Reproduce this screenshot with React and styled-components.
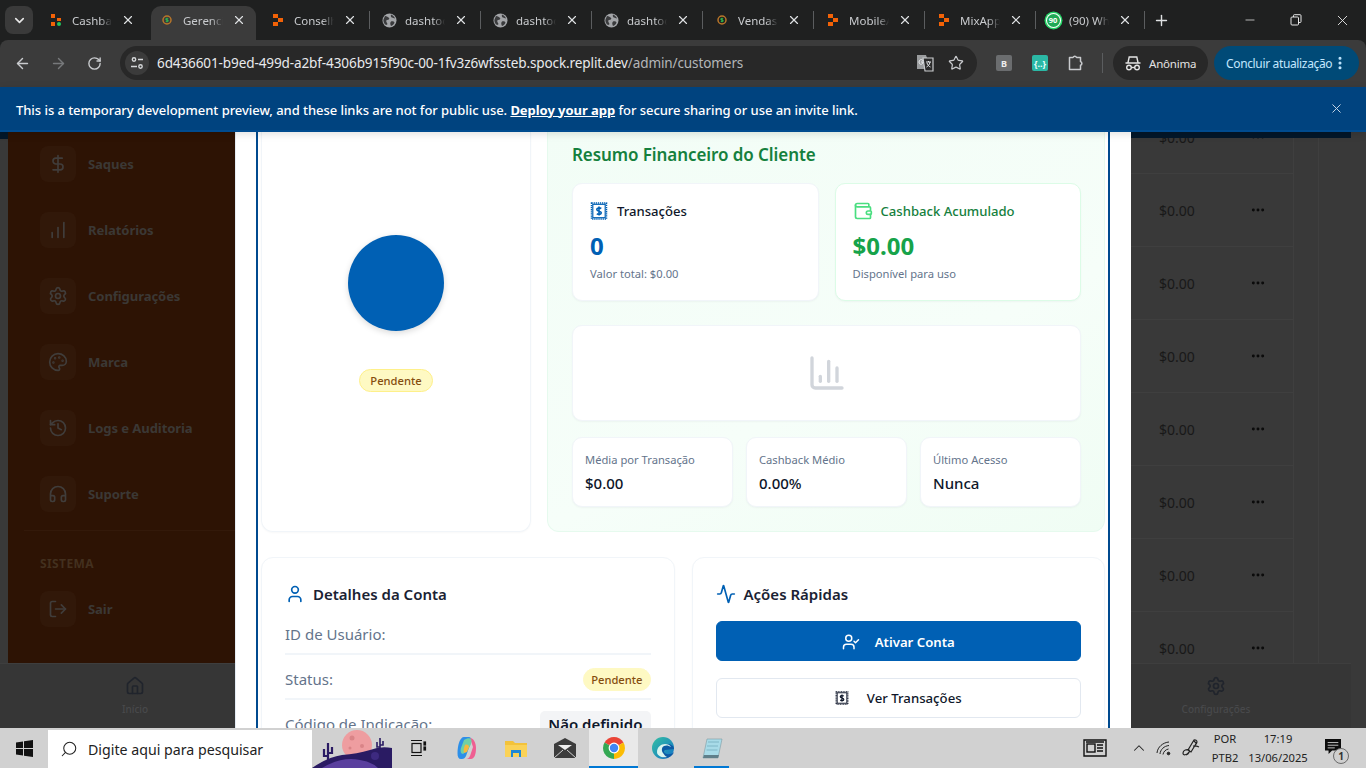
import React from "react";
import styled, { createGlobalStyle } from "styled-components";
import {
  ArrowLeft, ArrowRight, RotateCw, Star, X, Plus, Minus, ChevronDown, ChevronUp,
  DollarSign, ChartNoAxesColumnIncreasing, Settings, Palette, History, Headphones, LogOut,
  House, Wallet, ChartColumn, User, Activity, UserCheck, MoreHorizontal, Search, EllipsisVertical,
} from "lucide-react";

const Global = createGlobalStyle`
  html, body { margin: 0; padding: 0; width: 100%; height: 100%; overflow: hidden; }
  body { font-family: "Noto Sans", "Open Sans", sans-serif; }
  * { box-sizing: border-box; }
`;

const Screen = styled.div`
  width: 1366px; height: 768px; display: flex; flex-direction: column; overflow: hidden; background: #1f2020;
`;

/* ---------- browser chrome ---------- */
const TabStrip = styled.div`
  height: 40px; flex: none; display: flex; align-items: flex-end; padding-left: 5px; color: #d5d7d9;
`;
const TabMenu = styled.div`
  width: 28px; height: 28px; margin: 0 7px 6px 0; border-radius: 8px; background: #3a3a3a;
  display: flex; align-items: center; justify-content: center; color: #e6e6e6;
`;
const Tab = styled.div`
  position: relative; width: 105px; height: 34px; margin-right: ${p => p.$mr ?? 6}px; padding: 0 8px 6px;
  display: flex; align-items: center; gap: 8px; flex: none;
  border-radius: 10px 10px 0 0; background: ${p => (p.$active ? "#3b3b3b" : "transparent")};
  &::after {
    content: ""; display: ${p => (p.$sep ? "block" : "none")}; position: absolute;
    right: -3px; top: 5px; width: 1px; height: 18px; background: #5b5d5f;
  }
`;
const TabIcon = styled.span`
  width: 16px; height: 16px; flex: none; display: flex; align-items: center; justify-content: center;
`;
const TabLabel = styled.span`
  width: 40px; flex: none; overflow: hidden; white-space: nowrap; font-size: 11.5px; color: #c9cbce;
  -webkit-mask-image: linear-gradient(to right, #000 70%, transparent 100%);
  mask-image: linear-gradient(to right, #000 70%, transparent 100%);
`;
const TabClose = styled.span`
  width: 16px; height: 16px; flex: none; display: flex; align-items: center; justify-content: center; color: #dfe1e3;
`;
const NewTab = styled.span`
  display: flex; margin: 0 0 11px 5px; color: #dfe1e3;
`;
const WindowControls = styled.div`
  margin-left: auto; display: flex; align-self: stretch; color: #e6e6e6;
`;
const WindowButton = styled.span`
  width: 46.5px; display: flex; align-items: center; justify-content: center;
`;

const Toolbar = styled.div`
  height: 47px; flex: none; background: #3b3b3b; border-radius: 8px 8px 0 0;
  display: flex; align-items: center; padding: 0 7px 1px 4px; color: #c9cbce;
`;
const NavButton = styled.span`
  width: 36px; display: flex; justify-content: center; color: ${p => (p.$dim ? "#77797b" : "#c9cbce")};
`;
const Omnibox = styled.div`
  width: 857px; height: 34px; margin-left: 8px; background: #282828; border-radius: 17px;
  display: flex; align-items: center; padding: 0 13px 0 5px;
`;
const SiteInfo = styled.span`
  width: 24px; height: 24px; border-radius: 50%; background: #3b3b3b; display: flex;
  align-items: center; justify-content: center; margin-right: 8px;
`;
const Url = styled.span`
  font-size: 13.55px; color: #e8eaed; white-space: nowrap; flex: 1; letter-spacing: -0.12px;
`;
const UrlPath = styled.span` color: #b4b6b9; `;
const OmniIcon = styled.span`
  display: flex; margin-left: 13px; color: #c9cbce;
`;
const ExtSquare = styled.span`
  width: 16px; height: 16px; border-radius: 2px; flex: none; margin-left: ${p => p.$ml}px;
  background: ${p => p.$bg}; color: ${p => p.$fg}; font-size: 9px; font-weight: 700;
  display: flex; align-items: center; justify-content: center;
`;
const ExtIcon = styled.span`
  display: flex; margin-left: 18px; color: #c9cbce;
`;
const ToolSep = styled.span`
  width: 1px; height: 20px; background: #5b5d5f; margin: 0 10px 0 16px;
`;
const ProfilePill = styled.div`
  width: 95px; height: 34px; border-radius: 17px; background: #282828; display: flex; align-items: center;
  gap: 7px; padding-left: 11px; font-size: 11.5px; letter-spacing: -0.2px; color: #e3e3e3;
`;
const UpdatePill = styled.div`
  width: 145px; height: 34px; margin-left: 6px; border-radius: 17px; background: #004a77; display: flex;
  align-items: center; padding-left: 12px; font-size: 12px; color: #c2e7ff; white-space: nowrap; letter-spacing: -0.35px;
`;

const Banner = styled.div`
  height: 45px; flex: none; position: relative; z-index: 3; background: #00437f; color: #fff;
  border-bottom: 2px solid #004b8f;
  box-shadow: 0 2px 8px rgba(0, 0, 0, .12);
  display: flex; align-items: center; justify-content: space-between; padding: 2px 22px 0 16px;
  font-size: 13px; font-weight: 500; letter-spacing: -0.05px;
`;
const BannerLink = styled.span` font-weight: 700; text-decoration: underline; `;
const BannerClose = styled.span` display: flex; color: #c3d3e4; margin-top: -2px; `;

/* ---------- page ---------- */
const Stage = styled.div`
  flex: 1; min-height: 0; display: flex; overflow: hidden;
`;
const Backdrop = styled.div`
  width: ${p => p.$w}px; flex: none; display: flex; flex-direction: column; background: #393939; overflow: hidden;
`;
const BackdropBody = styled.div`
  flex: 1; min-height: 0; display: flex; overflow: hidden;
`;
const Gutter = styled.div` width: 8px; flex: none; `;
const DarkBand = styled.div`
  height: ${p => p.$h}px; background: #03172a; position: relative; z-index: 1;
`;
const RightBand = styled(DarkBand)` width: 220px; flex: none; `;
const Sidebar = styled.div`
  flex: 1; background: #2d1304; padding: 14px 0 0 32px; display: flex; flex-direction: column;
`;
const SideItem = styled.div`
  height: 36px; flex: none; display: flex; align-items: center; gap: 12px; margin-bottom: 30px;
  font-size: 13.1px; font-weight: 700; color: #3b3835; white-space: nowrap; letter-spacing: -0.1px;
  &:last-child { margin-bottom: 0; }
`;
const SideIcon = styled.span`
  width: 36px; height: 36px; border-radius: 8px; background: #311809; color: #403d3b;
  display: flex; align-items: center; justify-content: center; flex: none;
`;
const SideDivider = styled.div`
  height: 1px; flex: none; margin: -12px 0 0 -16px; background: #33190a;
`;
const SideHeading = styled.div`
  margin: 25px 0 19px; font-size: 12px; line-height: 16px; font-weight: 700; color: #43301f; letter-spacing: .4px;
`;
const BottomNav = styled.div`
  height: 65px; flex: none; background: #363636; border-top: 1px solid #3e3e3e; display: flex; width: ${p => p.$w || "100%"};
`;
const BottomItem = styled.div`
  width: ${p => p.$w}px; flex: none; display: flex; flex-direction: column; align-items: center; padding-top: 12px;
  color: #20242c; font-size: 10px; font-weight: 500; line-height: 13px; gap: 7px;
`;
const BottomLabel = styled.span` color: #48494b; white-space: nowrap; `;

const TableArea = styled.div`
  flex: 1; min-height: 0; display: flex; flex-direction: column; overflow: hidden;
`;
const TableWrap = styled.div`
  flex: 1; min-height: 0; display: flex; overflow: hidden; margin-top: -37px;
`;
const TableCol = styled.div`
  width: 163px; flex: none; border-right: 1px solid #3f3f3f;
`;
const Spacer = styled.div`
  width: 25px; flex: none; border-right: 1px solid #3f3f3f; margin-top: 37px;
`;
const TableRow = styled.div`
  height: 73px; display: flex; align-items: center; border-bottom: 1px solid #3f3f3f; padding-left: 28px;
  font-size: 14px; color: #181818;
`;
const TableAction = styled.span`
  margin-left: 55px; display: flex; color: #0a0a0a;
`;

const Modal = styled.div`
  width: 896px; flex: none; background: #fff; padding: 0 21px 0 20px; border-left: 1px solid #e4ebf3; position: relative; z-index: 2;
`;
const ModalInner = styled.div`
  height: 100%; overflow: hidden; border-left: 2px solid #004a8f; border-right: 2px solid #004a8f; padding: 0 3px;
`;
const TopRow = styled.div`
  display: grid; grid-template-columns: 270px 558px; gap: 16px; margin-bottom: 25px;
`;
const ProfileCard = styled.div`
  height: 400px; background: #fff; border: 1px solid #f1f5f9; border-top: 0; border-radius: 0 0 12px 12px;
  box-shadow: 0 1px 2px rgba(15, 23, 42, .03);
  display: flex; flex-direction: column; align-items: center; padding-top: 103px;
`;
const Avatar = styled.div`
  width: 96px; height: 96px; border-radius: 50%; background: #0060b4; box-shadow: 0 2px 6px rgba(0, 0, 0, .15); margin-bottom: 38px;
`;
const Badge = styled.span`
  height: 23px; padding: 0 ${p => (p.$bordered ? 10 : 7)}px; border-radius: 12px; background: #fef9c3; color: #854d0e;
  border: 1px solid ${p => (p.$bordered ? "#fef08a" : "#fef9c3")};
  font-size: 11.2px; font-weight: 500; display: inline-flex; align-items: center;
`;
const FinanceCard = styled.div`
  height: 400px; background: linear-gradient(155deg, #f2fdf6 0%, #f6fef9 60%, #f0fdf4 100%);
  border: 1px solid #e6faee; border-top: 0; border-radius: 0 0 12px 12px; padding: 9px 23px 0 24px;
`;
const FinanceTitle = styled.h2`
  margin: 0 0 14px; font-size: 17px; line-height: 28px; font-weight: 600; color: #15803d; letter-spacing: -0.08px;
`;
const StatGrid = styled.div`
  display: grid; grid-template-columns: 1fr 1fr; gap: 16px; margin-bottom: 24px;
`;
const StatCard = styled.div`
  height: 118px; background: #fff; border-radius: 10px; padding: 16px 17px 0;
  border: 1px solid ${p => (p.$green ? "#dcfce7" : "#f1f5f9")};
  box-shadow: 0 1px 2px rgba(15, 23, 42, .04);
`;
const StatHead = styled.div`
  height: 22px; display: flex; align-items: center; gap: ${p => (p.$green ? 8 : 9)}px; margin-bottom: 8px;
  font-size: 13.1px; font-weight: 500; color: ${p => (p.$green ? "#15803d" : "#0f172a")};
  svg { flex: none; }
`;
const StatValue = styled.div`
  font-size: 24px; line-height: 32px; font-weight: 700; margin-bottom: 4px; color: ${p => p.$color};
`;
const StatSub = styled.div`
  font-size: 11.2px; line-height: 16px; color: #64748b;
`;
const ChartCard = styled.div`
  height: 96px; background: #fff; border: 1px solid #f1f5f9; border-radius: 10px; margin-bottom: 16px;
  box-shadow: 0 1px 2px rgba(15, 23, 42, .04);
  display: flex; align-items: center; justify-content: center; color: #d1d5db;
`;
const MiniGrid = styled.div`
  display: grid; grid-template-columns: repeat(3, 1fr); gap: 13px;
`;
const MiniCard = styled.div`
  height: 70px; background: #fff; border: 1px solid #f1f5f9; border-radius: 10px; padding: 14px 12px 0;
  box-shadow: 0 1px 2px rgba(15, 23, 42, .04);
`;
const MiniLabel = styled.div`
  font-size: 11.2px; line-height: 16px; color: #64748b; margin-bottom: 3px; white-space: nowrap;
`;
const MiniValue = styled.div`
  font-size: 15px; line-height: 24px; font-weight: 500; color: #0f172a;
`;

const BottomRow = styled.div`
  display: grid; grid-template-columns: 1fr 1fr; gap: 17px;
`;
const PanelCard = styled.div`
  height: 260px; background: #fff; border: 1px solid #f1f5f9; border-radius: 12px; padding: 24px 23px 0;
  box-shadow: 0 1px 2px rgba(15, 23, 42, .03);
`;
const PanelHead = styled.div`
  height: 24px; display: flex; align-items: center; gap: 8px; font-size: 15px; font-weight: 600;
  margin-bottom: ${p => p.$mb}px; color: #1a2233; svg { color: #0060b4; flex: none; }
`;
const DetailRow = styled.div`
  height: 45px; padding-top: 5px; border-bottom: 2px solid #f1f5f9; display: flex; align-items: center;
  justify-content: space-between; font-size: 15px; color: #64748b;
`;
const CodeChip = styled.span`
  height: 26px; padding: 0 8px; background: #f3f4f6; border-radius: 5px; font-size: 15px; font-weight: 600; color: #0f172a;
  display: inline-flex; align-items: center;
`;
const ActionButton = styled.div`
  height: 40px; border-radius: 6px; margin-bottom: 17px; padding-top: ${p => (p.$primary ? 1 : 0)}px; display: flex; align-items: center; justify-content: center;
  gap: ${p => (p.$primary ? 15 : 18)}px; font-size: 13.2px; font-weight: ${p => (p.$primary ? 600 : 500)};
  background: ${p => (p.$primary ? "#0060b4" : "#fff")}; color: ${p => (p.$primary ? "#fff" : "#0f172a")};
  border: 1px solid ${p => (p.$primary ? "#0060b4" : "#e2e8f0")};
  svg { flex: none; }
`;

/* ---------- taskbar ---------- */
const Taskbar = styled.div`
  height: 40px; flex: none; position: relative; z-index: 4; background: #d1d1d1; display: flex; align-items: center; color: #111;
`;
const StartButton = styled.span`
  width: 48px; display: flex; justify-content: center;
`;
const SearchBox = styled.div`
  width: 264px; height: 38px; margin-top: 2px; background: #fff; display: flex; align-items: center; gap: 10px; padding-left: 12px;
  font-size: 14.2px; color: #222; white-space: nowrap;
  svg { transform: scaleX(-1); }
`;
const ScenerySvg = styled.svg` display: block; flex: none; align-self: flex-end; margin-right: 1px; `;
const TaskIcon = styled.span`
  width: 49px; height: 40px; flex: none; display: flex; align-items: center; justify-content: center; position: relative;
  background: ${p => (p.$active ? "#e9e9e9" : "transparent")};
  &::after {
    content: ""; display: ${p => (p.$open ? "block" : "none")}; position: absolute; bottom: 0; left: ${p => (p.$active ? 0 : 7)}px;
    right: ${p => (p.$active ? 0 : 7)}px; height: 2px; background: #0078d4;
  }
`;
const Tray = styled.div`
  margin-left: auto; display: flex; align-items: center; color: #222;
`;
const TrayIcon = styled.span`
  display: flex; margin-right: ${p => p.$mr}px;
`;
const TrayText = styled.div`
  width: ${p => p.$w}px; font-size: 11.2px; line-height: 19px; text-align: center; color: #222; white-space: nowrap;
`;
const Notify = styled.span`
  position: relative; display: flex; margin: 0 25px 2px 12px;
`;
const NotifyCount = styled.span`
  position: absolute; right: -8px; bottom: -9px; width: 16px; height: 16px; border-radius: 50%; background: #cfcfcf;
  border: 1.5px solid #6b6b6b; color: #333; font-size: 10px; font-weight: 700; display: flex; align-items: center; justify-content: center;
`;
const WaBadge = styled.span`
  width: 13px; height: 13px; border-radius: 50%; background: #1fa855; color: #fff;
  box-shadow: 0 0 0 1px #fff, 0 0 0 2.5px #25d366;
  font-size: 7.5px; font-weight: 700; display: flex; align-items: center; justify-content: center;
`;

/* ---------- drawn icons ---------- */
const ReplitIcon = () => (
  <svg width="14" height="14" viewBox="0 0 14 14"><g fill="#f26207"><rect x="2" y="1" width="5" height="4" /><rect x="7" y="5" width="5" height="4" /><rect x="2" y="9" width="5" height="4" /></g></svg>
);
const CashIcon = () => (
  <svg width="14" height="14" viewBox="0 0 14 14"><g fill="#f26207"><rect x="2" y="1" width="4" height="4" /><rect x="8" y="5" width="4" height="3" /><rect x="2" y="9" width="4" height="4" /></g><circle cx="10" cy="11" r="2" fill="#22c55e" /></svg>
);
const CoinIcon = () => (
  <svg width="14" height="14" viewBox="0 0 14 14"><circle cx="7" cy="7" r="4" fill="none" stroke="#b9762a" strokeWidth="1.500" /><path d="M7 4.800v4.400M8.200 5.800c-1.200-.7-2.400-.3-2.400.5s2.400.7 2.400 1.500-1.400 1-2.400.5" fill="none" stroke="#2eae4a" strokeWidth="1.100" /></svg>
);
const GlobeFilled = () => (
  <svg width="15" height="15" viewBox="0 0 15 15"><circle cx="7.500" cy="7.500" r="7" fill="#a3a5a8" /><path d="M3 3c2 0 3 1 4 2s-1 2-2 2-1 2 0 3 0 2-1 2C2 11 1 8 1.500 6.500zM9 1.500c2 1 3.500 2 4 4-1.500 0-2-1-3-1S8.500 3 9 1.500zM9 8.500c1.500-.5 3 0 3.500 1-.5 2-2 3-3.500 3.500-.5-1.500-1.500-3 0-4.500z" fill="#3a3b3d" /></svg>
);
const ReceiptIcon = ({ size = 18, color = "#0060b4" }) => (
  <svg width={size} height={size} viewBox="0 0 18 18" fill="none" stroke={color}>
    <rect x="1.500" y="1" width="15" height="16" strokeWidth="1.500" strokeDasharray="1.300 .8" />
    <rect x="2.800" y="2.300" width="12.400" height="13.400" strokeWidth="1.200" />
    <path d="M9 4.500v9M11.300 6.500c-1.900-1.100-4.500-.8-4.500 1 0 2.100 4.500 1.200 4.500 3.300 0 1.800-2.700 2-4.500.9" strokeWidth="1.600" />
  </svg>
);
const SiteTune = () => (
  <svg width="16" height="16" viewBox="0 0 16 16" fill="none" stroke="#d5d7d9" strokeWidth="1.400"><circle cx="5" cy="4.500" r="1.700" /><path d="M9 4.500h5M2 11.500h6" /><circle cx="11.500" cy="11.500" r="1.700" /></svg>
);
const TranslateIcon = () => (
  <svg width="20" height="20" viewBox="0 0 20 20"><path d="M2 2h9l1 3v11H2z" fill="#9a9c9e" /><path d="M8 5h10v13H10z" fill="#2b2b2b" stroke="#c9cbce" strokeWidth="1.200" /><path d="M4 9c0-3 4-3 4-1M4 9c0 3 4 3 4 0H6M11 9h5M13.500 8v1M15 9c-.5 3-2 4-3.500 5M12 10c.5 2 2 3.500 3.500 4" fill="none" stroke="#e8eaed" strokeWidth="1" /></svg>
);
const ExtensionIcon = () => (
  <svg width="20" height="20" viewBox="0 0 20 20" fill="none" stroke="currentColor" strokeWidth="1.500" strokeLinejoin="round"><path d="M3.500 4.500H7a2 2 0 0 1 3.600 0h3.900v4a2 2 0 0 1 0 3.800v4.200h-11z" /></svg>
);
const IncognitoIcon = () => (
  <svg width="18" height="18" viewBox="0 0 18 18" fill="none" stroke="#e3e3e3" strokeWidth="1.400"><path d="M1.500 9h15M4 8.500l1.200-5.500h7.600L14 8.500" /><circle cx="5" cy="13.500" r="2.300" /><circle cx="13" cy="13.500" r="2.300" /><path d="M7.300 13.500h3.400" /></svg>
);
const RestoreIcon = () => (
  <svg width="12" height="12" viewBox="0 0 12 12" fill="none" stroke="currentColor" strokeWidth="1"><rect x="1" y="3" width="7.500" height="8" rx="1" /><path d="M3.500 3V1.500a.8.8 0 0 1 .8-.8H10a1 1 0 0 1 1 1v6a.8.8 0 0 1-.8.8H8.500" /></svg>
);
const WindowsLogo = () => (
  <svg width="17" height="17" viewBox="0 0 17 17" fill="#111"><path d="M0 2.400 7 1.400V8H0zM8 1.200 17 0v8H8zM0 9h7v6.600L0 14.600zM8 9h9v8l-9-1.200z" /></svg>
);
const Scenery = () => (
  <ScenerySvg width="80" height="38" viewBox="0 0 80 38">
    <circle cx="45" cy="15" r="15" fill="#ee9da0" />
    <circle cx="40" cy="8" r="2.500" fill="#d98487" /><circle cx="50" cy="16" r="2" fill="#d98487" /><circle cx="38" cy="18" r="1.500" fill="#d98487" />
    <path d="M0 38 Q16 27 30 25 Q45 24 58 20 Q68 16 80 18 V38 Z" fill="#2a1b63" />
    <path d="M10 38 Q30 26 48 30 Q60 32 66 38Z" fill="#5a3f9e" />
    <circle cx="63" cy="26" r="4" fill="#3d2a80" />
    <path d="M16 33V13M16 26h-4v-7M16 23h4v-6" stroke="#2a1b63" strokeWidth="2.200" fill="none" />
    <path d="M68 19V8M68 15h3v-4M68 17h-3v-5" stroke="#2a1b63" strokeWidth="1.600" fill="none" />
  </ScenerySvg>
);
const TaskViewIcon = () => (
  <svg width="18" height="18" viewBox="0 0 18 18" fill="none" stroke="#111" strokeWidth="1.200"><rect x="3" y="4.500" width="9" height="9" /><path d="M2 1.500h11M2 16.500h11" /><rect x="15" y="3" width="1.500" height="3" fill="#111" /><rect x="15" y="8" width="1.500" height="3" fill="#111" /></svg>
);
const CopilotIcon = () => (
  <svg width="24" height="24" viewBox="0 0 24 24"><path d="M9 1h4c3 0 4 2 3 5l-5 14c-1 2-2 3-4 3H6c-2.500 0-3.500-2-3.500-6C2.500 9 5 1 9 1z" fill="#2d8fe8" /><path d="M15 2c3 0 6 4 6 10 0 7-2 11-5 11h-5c2 0 3-1 4-3l3-9z" fill="#ef5f92" /><path d="M9 4c3-2 6-2 7-1 1.500 3-1 8-4 12l-4 3c-2 0-3-3-2-6z" fill="#6fd0a6" /><path d="M10 9c2-1 4 0 4 2l-2 5-3 1c-1-2 0-6 1-8z" fill="#f5b93d" /></svg>
);
const FolderIcon = () => (
  <svg width="24" height="24" viewBox="0 0 24 24"><path d="M1 5h8l2 2h12v14H1z" fill="#f3c23a" /><path d="M1 9h22v12H1z" fill="#fad257" /><path d="M7 14h10v7h-2v-4H9v4H7z" fill="#1e88d6" /></svg>
);
const MailIcon = () => (
  <svg width="24" height="24" viewBox="0 0 24 24"><path d="M1 8 12 2l11 6v14H1z" fill="#3c3c3c" /><path d="M5 9h14l-7 5z" fill="#eee" /><path d="M1 22l9-8M23 22l-9-8" stroke="#d1d1d1" strokeWidth="1" /></svg>
);
const ChromeIcon = () => (
  <svg width="24" height="24" viewBox="0 0 24 24">
    <path d="M12 12 2.500 6.500A11 11 0 0 1 21.500 6.500z" fill="#ea4335" />
    <path d="M12 12l9.500-5.500A11 11 0 0 1 12 23z" fill="#fbbc04" />
    <path d="M12 12v11A11 11 0 0 1 2.500 6.500z" fill="#34a853" />
    <circle cx="12" cy="12" r="5.400" fill="#fff" /><circle cx="12" cy="12" r="4.200" fill="#4285f4" />
  </svg>
);
const EdgeIcon = () => (
  <svg width="24" height="24" viewBox="0 0 24 24">
    <defs><linearGradient id="edgeA" x1="0" y1="0" x2="1" y2="1"><stop offset="0" stopColor="#35c1a2" /><stop offset="1" stopColor="#1172c9" /></linearGradient></defs>
    <circle cx="12" cy="12" r="11" fill="url(#edgeA)" />
    <path d="M23 13c0-3-3-5-7-5-5 0-9 3-9 7 0 4 4 7 8 7 4-.5 7-3 8-6-2 2-5 2.500-7 2-3-.5-4-3-2-4z" fill="#0c59a4" />
    <path d="M6 16c0-5 4-8 8-8 3 0 5 1 6 3-2-1.500-5-2-7-1-2 1-3 4-1 7 1 1.500 2 3 4 4-5 1-10-1-10-5z" fill="#d9f4ee" />
  </svg>
);
const NotepadIcon = () => (
  <svg width="24" height="24" viewBox="0 0 24 24"><path d="M7 3h15l-4 19H3z" fill="#a8dbe8" stroke="#7e9aa3" strokeWidth=".6" /><path d="M8 6h11M7 10h11M6.500 14h11" stroke="#7fb6c6" strokeWidth="1" /><path d="M3 22h15l1-3H4z" fill="#5f7f8a" /></svg>
);
const NewsIcon = () => (
  <svg width="24" height="20" viewBox="0 0 24 20" fill="none" stroke="#111" strokeWidth="1.400"><path d="M1 2h22v16H1z" /><rect x="4" y="6" width="8" height="8" /><path d="M14 7h6M14 10h6M14 13h6M3 4h18" /></svg>
);
const WifiIcon = () => (
  <svg width="16" height="16" viewBox="0 0 16 16" fill="none" stroke="#222" strokeWidth="1"><path d="M1 13C1.500 7 7 2.500 13 2M4 14c.4-4.500 4-8 9-8.500M7 14.500c.3-2.500 2.500-5 5.500-5.500" /><circle cx="12.500" cy="13.500" r="1.300" fill="#222" /></svg>
);
const PenIcon = () => (
  <svg width="20" height="20" viewBox="0 0 20 20" fill="none" stroke="#222" strokeWidth="1.200"><path d="M7 12 13 2c1.500-.5 3 .5 3 2l-6 10zM8 14c-2 3-6 4-6 1s4-4 6-3c1 1 0 4-3 5M13 3l3 3M12 8c2-.5 4 0 6 1" /></svg>
);
const BubbleIcon = () => (
  <svg width="16" height="16" viewBox="0 0 18 18"><path d="M0 0h18v13H8l-4 4v-4H0z" fill="#0c0c0c" /><path d="M3 4h12M3 7h12M3 10h8" stroke="#d1d1d1" strokeWidth="1" /></svg>
);

const tabs = [
  { label: "Cashback", icon: <CashIcon /> },
  { label: "Gerenciar", icon: <CoinIcon />, active: true },
  { label: "Conselho", icon: <ReplitIcon />, sep: true },
  { label: "dashtoon", icon: <GlobeFilled />, sep: true },
  { label: "dashtoon", icon: <GlobeFilled />, sep: true },
  { label: "dashtoon", icon: <GlobeFilled />, sep: true },
  { label: "Vendas", icon: <CoinIcon />, sep: true },
  { label: "MobileApp", icon: <ReplitIcon />, sep: true },
  { label: "MixApp", icon: <ReplitIcon />, sep: true, mr: 4 },
  { label: "(90) WhatsApp", icon: <WaBadge>90</WaBadge>, sep: true },
];
const sideItems = [
  ["Saques", DollarSign], ["Relatórios", ChartNoAxesColumnIncreasing], ["Configurações", Settings],
  ["Marca", Palette], ["Logs e Auditoria", History], ["Suporte", Headphones],
];

export default function App() {
  return (
    <Screen>
      <Global />
      <TabStrip>
        <TabMenu><ChevronDown size={15} strokeWidth={2.6} /></TabMenu>
        {tabs.map((t, i) => (
          <Tab key={i} $active={t.active} $sep={t.sep} $mr={t.mr}>
            <TabIcon>{t.icon}</TabIcon>
            <TabLabel>{t.label}</TabLabel>
            <TabClose><X size={14} strokeWidth={2} /></TabClose>
          </Tab>
        ))}
        <NewTab><Plus size={17} strokeWidth={2} /></NewTab>
        <WindowControls>
          <WindowButton><Minus size={14} strokeWidth={1.3} /></WindowButton>
          <WindowButton><RestoreIcon /></WindowButton>
          <WindowButton><X size={17} strokeWidth={1.3} /></WindowButton>
        </WindowControls>
      </TabStrip>

      <Toolbar>
        <NavButton><ArrowLeft size={17} /></NavButton>
        <NavButton $dim><ArrowRight size={17} /></NavButton>
        <NavButton><RotateCw size={15} strokeWidth={2.2} /></NavButton>
        <Omnibox>
          <SiteInfo><SiteTune /></SiteInfo>
          <Url>6d436601-b9ed-499d-a2bf-4306b915f90c-00-1fv3z6wfssteb.spock.replit.dev<UrlPath>/admin/customers</UrlPath></Url>
          <OmniIcon><TranslateIcon /></OmniIcon>
          <OmniIcon><Star size={16} strokeWidth={1.8} /></OmniIcon>
        </Omnibox>
        <ExtSquare $ml={19} $bg="#6b6d6f" $fg="#eee">B</ExtSquare>
        <ExtSquare $ml={20} $bg="#2bb8a5" $fg="#eafffb">{"{..}"}</ExtSquare>
        <ExtIcon><ExtensionIcon /></ExtIcon>
        <ToolSep />
        <ProfilePill><IncognitoIcon />Anônima</ProfilePill>
        <UpdatePill>Concluir atualização<EllipsisVertical size={16} strokeWidth={2.6} /></UpdatePill>
      </Toolbar>

      <Banner>
        <span>This is a temporary development preview, and these links are not for public use. <BannerLink>Deploy your app</BannerLink> for secure sharing or use an invite link.</span>
        <BannerClose><X size={15} strokeWidth={1.6} /></BannerClose>
      </Banner>

      <Stage>
        <Backdrop $w={235}>
          <BackdropBody>
            <Gutter><DarkBand $h={7} /></Gutter>
            <Sidebar>
              {sideItems.map(([label, Icon]) => (
                <SideItem key={label}><SideIcon><Icon size={20} /></SideIcon>{label}</SideItem>
              ))}
              <SideDivider />
              <SideHeading>SISTEMA</SideHeading>
              <SideItem><SideIcon><LogOut size={20} /></SideIcon>Sair</SideItem>
            </Sidebar>
          </BackdropBody>
          <BottomNav>
            <BottomItem $w={270}><House size={20} /><BottomLabel>Início</BottomLabel></BottomItem>
          </BottomNav>
        </Backdrop>

        <Modal>
          <ModalInner>
            <TopRow>
              <ProfileCard>
                <Avatar />
                <Badge $bordered>Pendente</Badge>
              </ProfileCard>
              <FinanceCard>
                <FinanceTitle>Resumo Financeiro do Cliente</FinanceTitle>
                <StatGrid>
                  <StatCard>
                    <StatHead><ReceiptIcon />Transações</StatHead>
                    <StatValue $color="#0060b4">0</StatValue>
                    <StatSub>Valor total: $0.00</StatSub>
                  </StatCard>
                  <StatCard $green>
                    <StatHead $green><Wallet size={20} color="#4ade80" />Cashback Acumulado</StatHead>
                    <StatValue $color="#16a34a">$0.00</StatValue>
                    <StatSub>Disponível para uso</StatSub>
                  </StatCard>
                </StatGrid>
                <ChartCard><ChartColumn size={40} strokeWidth={2} /></ChartCard>
                <MiniGrid>
                  <MiniCard><MiniLabel>Média por Transação</MiniLabel><MiniValue>$0.00</MiniValue></MiniCard>
                  <MiniCard><MiniLabel>Cashback Médio</MiniLabel><MiniValue>0.00%</MiniValue></MiniCard>
                  <MiniCard><MiniLabel>Último Acesso</MiniLabel><MiniValue>Nunca</MiniValue></MiniCard>
                </MiniGrid>
              </FinanceCard>
            </TopRow>
            <BottomRow>
              <PanelCard>
                <PanelHead $mb={4}><User size={20} />Detalhes da Conta</PanelHead>
                <DetailRow>ID de Usuário:</DetailRow>
                <DetailRow>Status:<Badge>Pendente</Badge></DetailRow>
                <DetailRow>Código de Indicação:<CodeChip>Não definido</CodeChip></DetailRow>
              </PanelCard>
              <PanelCard>
                <PanelHead $mb={15}><Activity size={20} />Ações Rápidas</PanelHead>
                <ActionButton $primary><UserCheck size={18} />Ativar Conta</ActionButton>
                <ActionButton><ReceiptIcon size={14} color="#0f172a" />Ver Transações</ActionButton>
              </PanelCard>
            </BottomRow>
          </ModalInner>
        </Modal>

        <Backdrop $w={235}>
          <TableArea>
            <RightBand $h={6} />
            <TableWrap>
              <TableCol>
                {Array.from({ length: 8 }).map((_, i) => (
                  <TableRow key={i}>$0.00<TableAction><MoreHorizontal size={16} strokeWidth={2.4} /></TableAction></TableRow>
                ))}
              </TableCol>
              <Spacer />
            </TableWrap>
          </TableArea>
          <BottomNav $w="220px">
            <BottomItem $w={170}><Settings size={20} /><BottomLabel>Configurações</BottomLabel></BottomItem>
          </BottomNav>
        </Backdrop>
      </Stage>

      <Taskbar>
        <StartButton><WindowsLogo /></StartButton>
        <SearchBox><Search size={18} strokeWidth={1.4} />Digite aqui para pesquisar</SearchBox>
        <Scenery />
        <TaskIcon><TaskViewIcon /></TaskIcon>
        <TaskIcon><CopilotIcon /></TaskIcon>
        <TaskIcon><FolderIcon /></TaskIcon>
        <TaskIcon><MailIcon /></TaskIcon>
        <TaskIcon $active $open><ChromeIcon /></TaskIcon>
        <TaskIcon><EdgeIcon /></TaskIcon>
        <TaskIcon $open><NotepadIcon /></TaskIcon>
        <Tray>
          <TrayIcon $mr={23}><NewsIcon /></TrayIcon>
          <TrayIcon $mr={8}><ChevronUp size={18} strokeWidth={1.4} /></TrayIcon>
          <TrayIcon $mr={9}><WifiIcon /></TrayIcon>
          <TrayIcon $mr={6}><PenIcon /></TrayIcon>
          <TrayText $w={36}>POR<br />PTB2</TrayText>
          <TrayText $w={70}>17:19<br />13/06/2025</TrayText>
          <Notify><BubbleIcon /><NotifyCount>1</NotifyCount></Notify>
        </Tray>
      </Taskbar>
    </Screen>
  );
}
